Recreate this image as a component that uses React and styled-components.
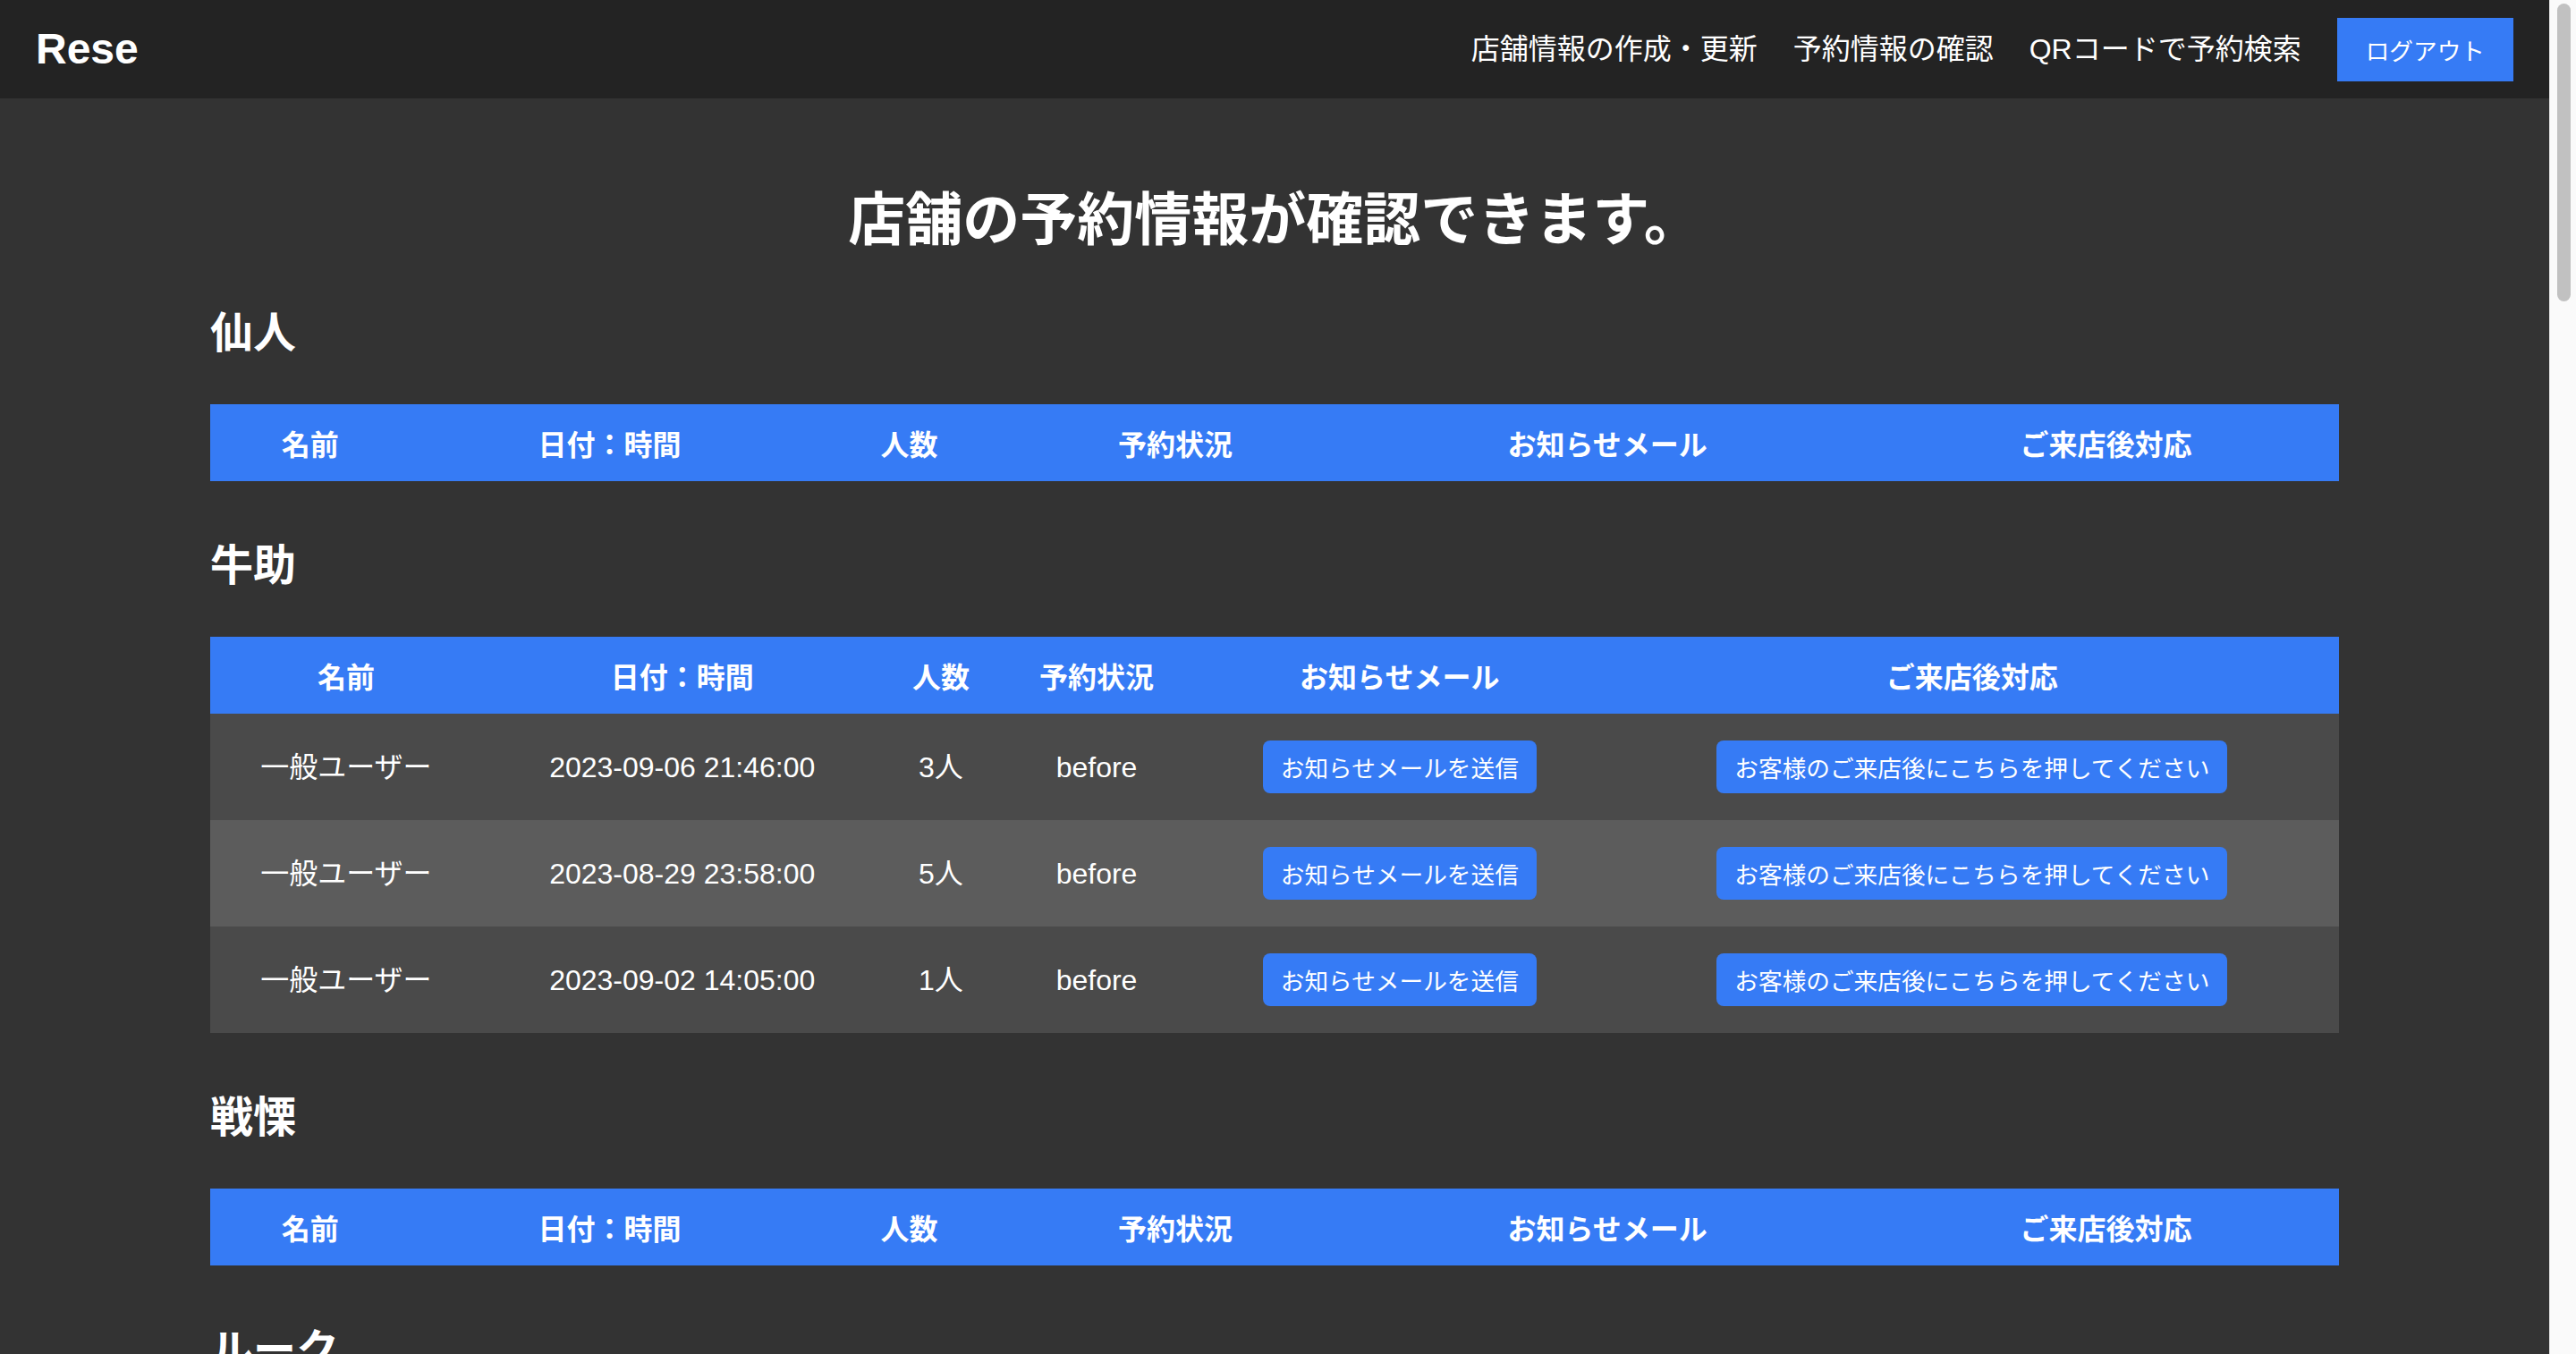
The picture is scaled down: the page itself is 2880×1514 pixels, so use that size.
import styled, { createGlobalStyle } from 'styled-components'

const GlobalStyle = createGlobalStyle`
  html {
    background: #333333;
  }
  body {
    margin: 0;
    color: #ffffff;
    font-family: "Liberation Sans", "Noto Sans CJK JP", sans-serif;
  }
`

const BLUE = '#367bf5'

// the window: page on the left, the browser's scroll rail on the right
const Frame = styled.div`
  display: flex;
  height: 100vh;
  overflow: hidden;
`

const Page = styled.div`
  flex: 1;
  min-width: 0;
  background: #333333;
  overflow: hidden;
`

const ScrollRail = styled.div`
  width: 30px;
  box-sizing: border-box;
  padding: 4px 6px 0 8px;
  background: #fafafa;
  border-left: 1px solid #e6e6e6;
`

const ScrollThumb = styled.div`
  height: 333px;
  border-radius: 8px;
  background: #c1c1c1;
`

const Header = styled.header`
  height: 110px;
  box-sizing: border-box;
  padding: 0 40px;
  background: #232323;
  display: flex;
  align-items: center;
  justify-content: space-between;
`

const Logo = styled.div`
  font-size: 48px;
  font-weight: 700;
  line-height: 1;
`

const Nav = styled.nav`
  display: flex;
  align-items: center;
  gap: 40px;
`

const NavLink = styled.a`
  color: #ffffff;
  text-decoration: none;
  font-size: 32px;
  line-height: 48px;
`

const LogoutButton = styled.button`
  height: 71px;
  padding: 0 32px;
  border: none;
  background: ${BLUE};
  color: #ffffff;
  font-family: inherit;
  font-size: 26.67px;
`

const Main = styled.main`
  padding: 98px 235px 0;
`

const Title = styled.h1`
  margin: 0 0 59px;
  text-align: center;
  font-size: 64px;
  line-height: 77px;
  font-weight: 700;
`

const Section = styled.section`
  margin-bottom: 66px;
`

const ShopName = styled.h2`
  margin: 0 0 50px;
  font-size: 48px;
  line-height: 58px;
  font-weight: 700;
`

const Table = styled.table`
  width: 100%;
  border-collapse: collapse;
  font-size: 32px;
`

const Th = styled.th`
  height: 86px;
  padding: 0 16px;
  background: ${BLUE};
  font-weight: 700;
  white-space: nowrap;
`

const Row = styled.tr`
  background: #4a4a4a;
  &:nth-child(even) {
    background: #5c5c5c;
  }
`

const Td = styled.td`
  padding: 30px 16px;
  text-align: center;
  line-height: 48px;
  white-space: nowrap;
`

const ActionButton = styled.button`
  height: 59px;
  padding: 0 20px;
  border: none;
  border-radius: 8px;
  background: ${BLUE};
  color: #ffffff;
  font-family: inherit;
  font-size: 26.67px;
`

const shops = [
  { name: '仙人', reservations: [] },
  {
    name: '牛助',
    reservations: [
      { user: '一般ユーザー', date: '2023-09-06 21:46:00', people: 3, status: 'before' },
      { user: '一般ユーザー', date: '2023-08-29 23:58:00', people: 5, status: 'before' },
      { user: '一般ユーザー', date: '2023-09-02 14:05:00', people: 1, status: 'before' },
    ],
  },
  { name: '戦慄', reservations: [] },
  { name: 'ルーク', reservations: [] },
]

function App() {
  return <>
    <GlobalStyle />
    <Frame>
      <Page>
        <Header>
          <Logo>Rese</Logo>
          <Nav>
            <NavLink href="#">店舗情報の作成・更新</NavLink>
            <NavLink href="#">予約情報の確認</NavLink>
            <NavLink href="#">QRコードで予約検索</NavLink>
            <LogoutButton>ログアウト</LogoutButton>
          </Nav>
        </Header>
        <Main>
          <Title>店舗の予約情報が確認できます。</Title>
          {shops.map(shop => (
            <Section key={shop.name}>
              <ShopName>{shop.name}</ShopName>
              <Table>
                <thead>
                  <tr>
                    <Th>名前</Th>
                    <Th>日付：時間</Th>
                    <Th>人数</Th>
                    <Th>予約状況</Th>
                    <Th>お知らせメール</Th>
                    <Th>ご来店後対応</Th>
                  </tr>
                </thead>
                <tbody>
                  {shop.reservations.map((r, i) => (
                    <Row key={i}>
                      <Td>{r.user}</Td>
                      <Td>{r.date}</Td>
                      <Td>{r.people}人</Td>
                      <Td>{r.status}</Td>
                      <Td><ActionButton>お知らせメールを送信</ActionButton></Td>
                      <Td><ActionButton>お客様のご来店後にこちらを押してください</ActionButton></Td>
                    </Row>
                  ))}
                </tbody>
              </Table>
            </Section>
          ))}
        </Main>
      </Page>
      <ScrollRail>
        <ScrollThumb />
      </ScrollRail>
    </Frame>
  </>
}

export default App
